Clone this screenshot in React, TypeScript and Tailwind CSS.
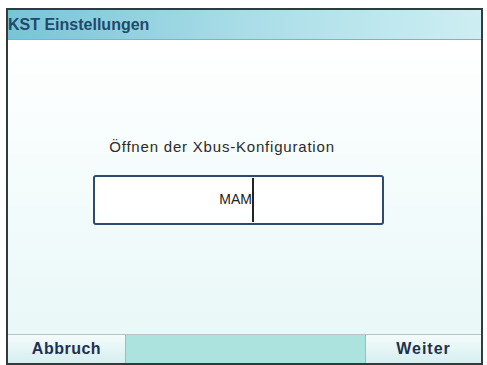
export default function App() {
  return (
    <div className="w-[487px] h-[365px] bg-white pt-2 pl-[6px] pr-[4px] overflow-hidden" style={{ fontFamily: '"Liberation Sans", Arial, sans-serif' }}>
      <div className="h-[357px] border-2 border-[#333a3e] flex flex-col">
        {/* title bar */}
        <div className="h-[30px] border-b border-[#9aa9ae] bg-gradient-to-r from-[#78c4d6] via-[#a9dde8] to-[#cdeef3] flex items-center">
          <span className="text-[16px] font-bold text-[#1e4a6b]">KST Einstellungen</span>
        </div>

        {/* content */}
        <div className="flex-1 bg-gradient-to-b from-white to-[#e9f8f8] flex flex-col items-center">
          <div className="mt-[96px] ml-[-45px] text-[15px] tracking-[0.8px] text-[#2b2b2b]">Öffnen der Xbus-Konfiguration</div>
          <div className="mt-[16px] ml-[-12px] w-[291px] h-[50px] border-2 border-[#2f4a6c] rounded-[3px] bg-white flex">
            <div className="w-[157px] flex items-center justify-end text-[14px] text-[#222]">MAM</div>
            <div className="w-[2px] bg-[#222] my-[1px]" />
          </div>
        </div>

        {/* button bar */}
        <div className="h-[29px] border-t border-[#b8c4c6] bg-[#ade3de] flex justify-between">
          <button className="w-[118px] h-full bg-gradient-to-b from-[#f4fbfb] to-[#d6eff0] border-r border-[#a7b7ba] text-[16px] font-bold text-[#1f2f52] tracking-[0.5px]">
            Abbruch
          </button>
          <button className="w-[116px] h-full bg-gradient-to-b from-[#f4fbfb] to-[#d6eff0] border-l border-[#a7b7ba] text-[16px] font-bold text-[#1f2f52] tracking-[1px]">
            Weiter
          </button>
        </div>
      </div>
    </div>
  );
}
